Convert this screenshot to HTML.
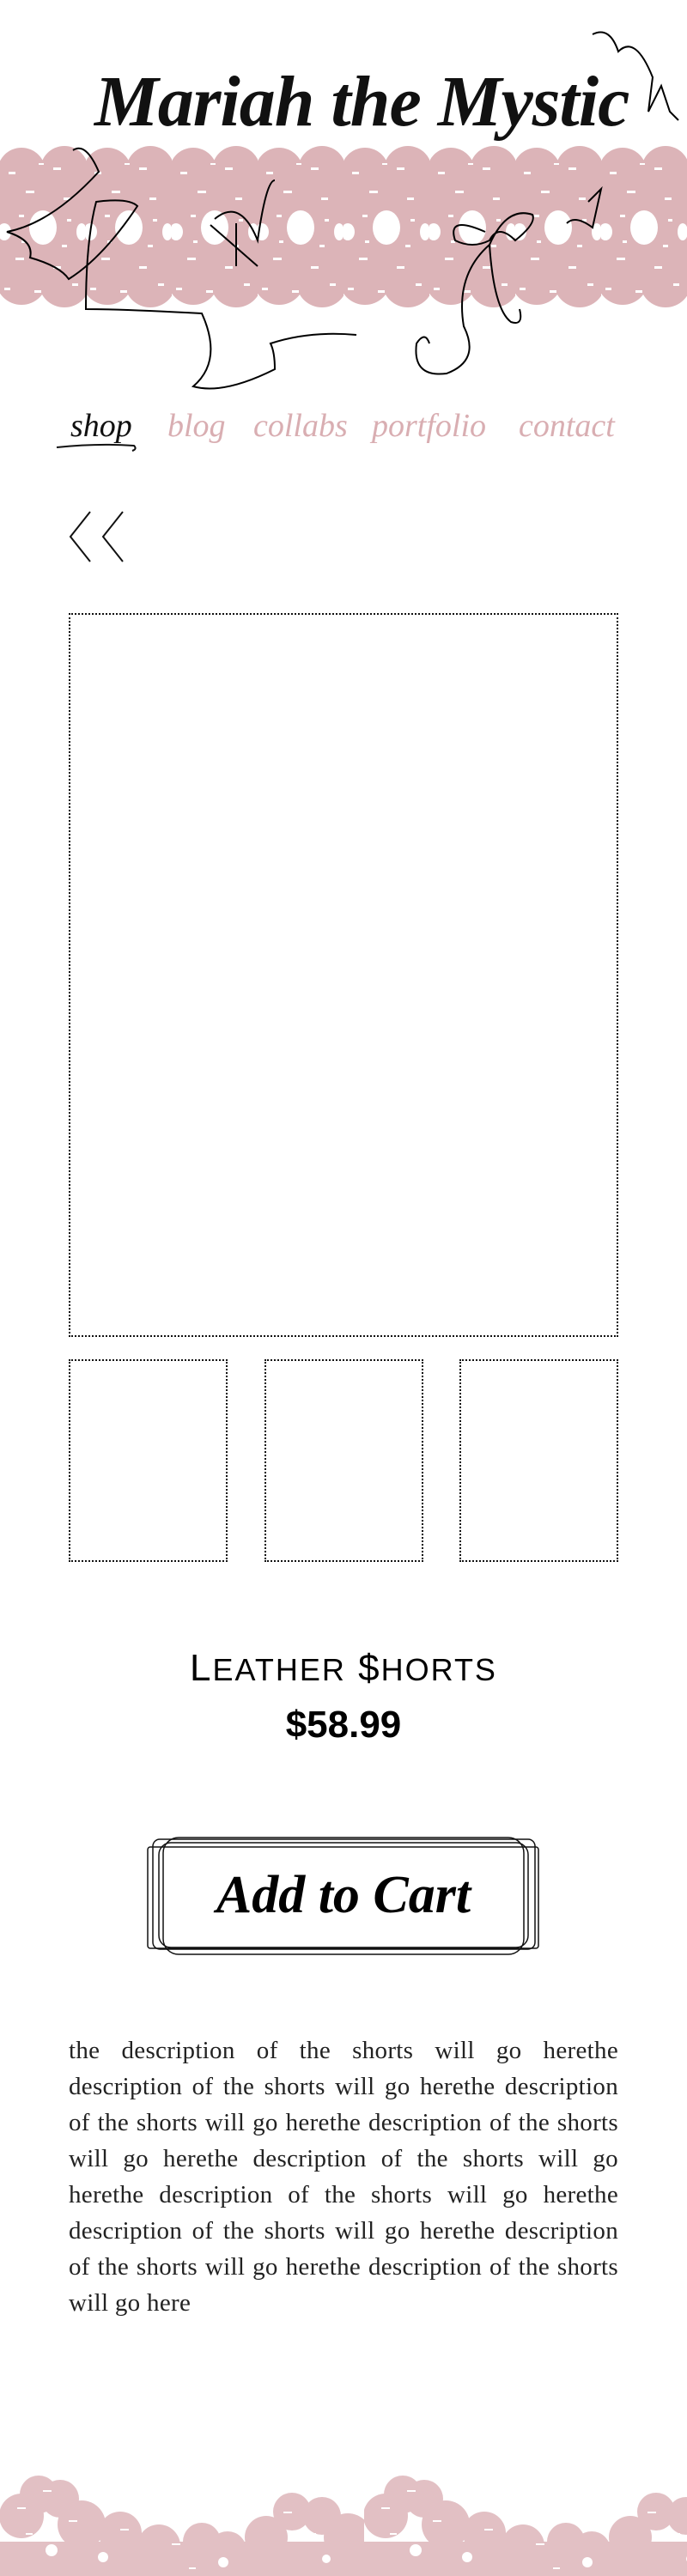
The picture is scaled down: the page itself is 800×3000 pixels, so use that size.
<!DOCTYPE html>
<html><head><meta charset="utf-8">
<style>
html,body{margin:0;padding:0;background:#fff;}
body{width:800px;height:3000px;position:relative;overflow:hidden;font-family:"Liberation Serif",serif;}
.abs{position:absolute;}
.box{position:absolute;border:2px dotted #111;box-sizing:border-box;}
.script{font-family:"Liberation Serif",serif;font-style:italic;}
#title{left:110px;top:70px;width:600px;font-size:84px;font-weight:bold;color:#111;letter-spacing:-1px;white-space:nowrap;}
.nav{top:474px;font-size:38px;color:#d9aeb2;white-space:nowrap;}
#desc{left:80px;top:2367px;width:640px;font-size:29px;line-height:42px;text-align:justify;color:#222;letter-spacing:0.3px;}
</style></head><body>

<svg class="abs" style="left:0;top:160px" width="800" height="210">
<defs>
<pattern id="lace" x="0" y="0" width="100" height="210" patternUnits="userSpaceOnUse">
<g fill="#dcb4b8">
<circle cx="25" cy="40" r="28"/><circle cx="75" cy="38" r="28"/><circle cx="50" cy="55" r="24"/>
<rect x="0" y="50" width="100" height="110"/>
<circle cx="25" cy="165" r="30"/><circle cx="75" cy="168" r="30"/><circle cx="50" cy="155" r="24"/>
</g>
<g fill="#fff">
<ellipse cx="50" cy="105" rx="16" ry="20"/><ellipse cx="5" cy="110" rx="8" ry="10"/><ellipse cx="95" cy="110" rx="6" ry="10"/>
<rect x="10" y="40" width="8" height="3"/><rect x="30" y="62" width="10" height="3"/><rect x="62" y="35" width="9" height="3"/>
<rect x="74" y="70" width="8" height="3"/><rect x="18" y="140" width="10" height="3"/><rect x="62" y="150" width="9" height="3"/>
<rect x="40" y="178" width="8" height="3"/><rect x="84" y="170" width="7" height="3"/><rect x="5" y="175" width="7" height="3"/>
<rect x="22" y="90" width="6" height="3"/><rect x="72" y="125" width="6" height="3"/><rect x="25" y="120" width="5" height="3"/>
<rect x="78" y="95" width="5" height="3"/><rect x="45" y="30" width="6" height="2"/><rect x="45" y="190" width="6" height="2"/>
</g>
</pattern>
</defs>
<rect x="0" y="0" width="800" height="210" fill="url(#lace)"/>
</svg>

<div id="title" class="abs script">Mariah the Mystic</div>

<svg class="abs" style="left:0;top:0" width="800" height="460" fill="none" stroke="#000" stroke-width="2">
<path d="M85 175 Q100 165 115 200 Q60 260 8 270 Q40 280 35 300 Q70 310 80 325 Q120 300 160 240 Q150 230 112 235 Q100 280 100 360 Q140 360 235 365 Q260 420 225 450 Q260 460 320 430 Q320 410 315 400 Q360 385 415 390"/>
<path d="M250 255 Q280 230 300 280 Q310 210 320 210 M245 262 L300 310 M275 260 L275 310"/>
<path d="M565 270 Q520 250 530 280 Q550 290 570 280 Q580 260 600 280 Q625 260 620 250 Q590 240 570 285 Q530 320 540 380 Q560 420 520 435 Q480 440 485 400 Q495 385 500 400 M570 285 Q575 360 595 375 Q610 380 605 360"/>
<path d="M660 260 Q670 250 690 265 L700 220 L685 235 M690 40 Q710 30 720 60 Q740 40 760 90 L755 130 L770 100 L780 130 L790 140"/>
</svg>

<div class="abs nav script" style="left:82px;color:#111;">shop</div>
<svg class="abs" style="left:64px;top:515px" width="100" height="12"><path d="M2 6 Q50 1 92 4 Q96 8 90 10" stroke="#111" stroke-width="2" fill="none"/></svg>
<div class="abs nav script" style="left:195px;">blog</div>
<div class="abs nav script" style="left:295px;">collabs</div>
<div class="abs nav script" style="left:433px;">portfolio</div>
<div class="abs nav script" style="left:604px;">contact</div>

<svg class="abs" style="left:75px;top:592px" width="90" height="66" fill="none" stroke="#111" stroke-width="2">
<path d="M30 4 L7 33 L30 62 M68 4 L45 33 L68 62"/>
</svg>

<div class="box" style="left:80px;top:714px;width:640px;height:843px;"></div>
<div class="box" style="left:80px;top:1583px;width:185px;height:236px;"></div>
<div class="box" style="left:308px;top:1583px;width:185px;height:236px;"></div>
<div class="box" style="left:535px;top:1583px;width:185px;height:236px;"></div>

<div class="abs" style="left:0;top:1918px;width:800px;text-align:center;font-family:'Liberation Sans',sans-serif;font-size:44px;color:#000;letter-spacing:2px;">L<span style="font-size:36px">EATHER</span> $<span style="font-size:36px">HORTS</span></div>
<div class="abs" style="left:0;top:1984px;width:800px;text-align:center;font-family:'Liberation Sans',sans-serif;font-size:44px;font-weight:bold;color:#000;">$58.99</div>

<svg class="abs" style="left:170px;top:2136px" width="465" height="145" fill="none" stroke="#111" stroke-width="1.5">
<rect x="15" y="10" width="430" height="122" rx="14"/>
<rect x="8" y="6" width="445" height="128" rx="8"/>
<rect x="2" y="15" width="455" height="118" rx="3"/>
<rect x="20" y="4" width="420" height="136" rx="18"/>
</svg>
<div class="abs script" style="left:0;top:2172px;width:800px;text-align:center;font-size:62px;font-weight:bold;color:#000;">Add to Cart</div>

<div id="desc" class="abs">the description of the shorts will go herethe description of the shorts will go herethe description of the shorts will go herethe description of the shorts will go herethe description of the shorts will go herethe description of the shorts will go herethe description of the shorts will go herethe description of the shorts will go herethe description of the shorts will go here</div>

<svg class="abs" style="left:0;top:2870px" width="800" height="130">
<defs>
<pattern id="lace2" x="0" y="0" width="424" height="130" patternUnits="userSpaceOnUse">
<g fill="#e2c0c4">
<circle cx="45" cy="35" r="22"/><circle cx="70" cy="40" r="22"/><circle cx="25" cy="60" r="26"/><circle cx="95" cy="70" r="28"/>
<circle cx="140" cy="80" r="25"/><circle cx="185" cy="95" r="25"/><circle cx="235" cy="90" r="22"/><circle cx="265" cy="100" r="22"/>
<circle cx="340" cy="55" r="22"/><circle cx="375" cy="60" r="22"/><circle cx="310" cy="85" r="25"/><circle cx="405" cy="85" r="28"/>
<rect x="0" y="90" width="424" height="40"/>
</g>
<g fill="#fff">
<rect x="20" y="50" width="10" height="2"/><rect x="50" y="30" width="10" height="2"/><rect x="80" y="65" width="10" height="2"/>
<rect x="140" y="75" width="10" height="2"/><rect x="200" y="92" width="10" height="2"/><rect x="330" y="55" width="10" height="2"/>
<circle cx="120" cy="108" r="6"/><circle cx="260" cy="114" r="6"/><circle cx="380" cy="110" r="5"/><circle cx="60" cy="100" r="7"/>
<rect x="30" y="80" width="8" height="2"/><rect x="360" y="80" width="8" height="2"/><rect x="220" y="120" width="8" height="2"/>
</g>
</pattern>
</defs>
<rect x="0" y="0" width="800" height="130" fill="url(#lace2)"/>
</svg>

</body></html>
